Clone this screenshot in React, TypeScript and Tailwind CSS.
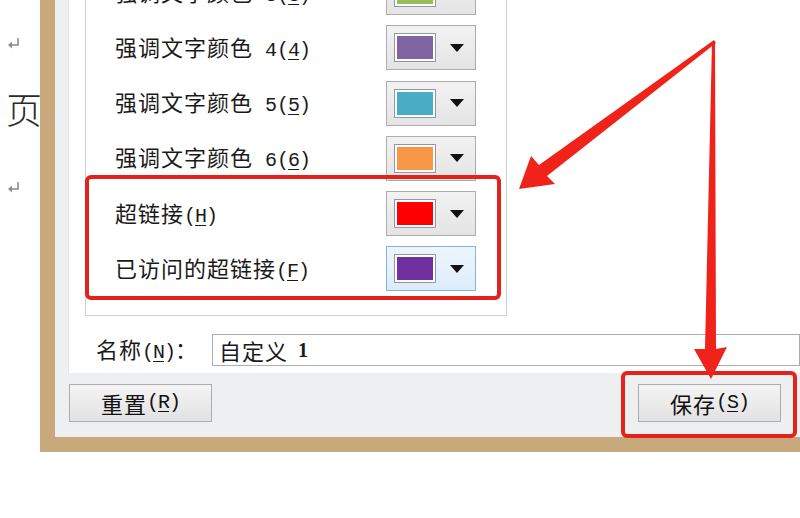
import React from "react";

const cjk = "font-['Noto_Sans_CJK_SC',sans-serif]";
const mono = "font-['Liberation_Mono','Noto_Sans_CJK_SC',monospace]";

type Row = { label: string; num?: string; hotkey: string; color: string; focused?: boolean };

const rows: Row[] = [
  { label: "强调文字颜色", num: "3", hotkey: "3", color: "#9bbb59" },
  { label: "强调文字颜色", num: "4", hotkey: "4", color: "#8064a2" },
  { label: "强调文字颜色", num: "5", hotkey: "5", color: "#4bacc6" },
  { label: "强调文字颜色", num: "6", hotkey: "6", color: "#f79646" },
  { label: "超链接", hotkey: "H", color: "#ff0000" },
  { label: "已访问的超链接", hotkey: "F", color: "#7030a0", focused: true },
];

// paragraph mark as in the word document behind the dialog
const ParaMark = () => (
  <svg width="14" height="13" viewBox="0 0 14 13">
    <path d="M11 1 V8 H3" fill="none" stroke="#8c8c8c" strokeWidth="1.6" />
    <polygon points="1,8 5,4.5 5,11.5" fill="#8c8c8c" />
  </svg>
);

const Hotkey = ({ k }: { k: string }) => (
  <span className={`${mono} text-[20px] tracking-[-1px]`}>
    (<span className="underline underline-offset-[3px] decoration-1">{k}</span>)
  </span>
);

const ColorButton = ({ color, focused }: { color: string; focused?: boolean }) => (
  <div
    className={`w-[90px] h-[45px] flex items-center pl-[7px] border ${
      focused ? "border-[#7eb4ea] bg-gradient-to-b from-[#eef6fd] to-[#dcecfc]" : "border-[#adadad] bg-gradient-to-b from-[#f2f2f2] to-[#e4e4e4]"
    }`}
  >
    <div className="w-[42px] h-[29px] border border-[#9098a4] bg-white p-[2px]">
      <div className="w-full h-full" style={{ backgroundColor: color }} />
    </div>
    <svg width="14" height="8" viewBox="0 0 14 8" className="ml-[14px]">
      <polygon points="0,0 14,0 7,8" fill="#111" />
    </svg>
  </div>
);

const PushButton = ({ text, k }: { text: string; k: string }) => (
  <div className="w-[143px] h-[38px] flex items-center justify-center border border-[#acacac] bg-gradient-to-b from-[#f4f4f4] to-[#e2e2e2] text-[22px] tracking-[1px] text-[#111]">
    {text}
    <Hotkey k={k} />
  </div>
);

export default function App() {
  return (
    <div className={`relative w-[800px] h-[518px] overflow-hidden bg-white ${cjk} text-[#1a1a1a]`}>
      <div className="flex">
        {/* document margin */}
        <div className="w-[40px] shrink-0 pt-[37px] pl-[7px]">
          <ParaMark />
          <div className="mt-[36px] -ml-[1px] text-[36px] leading-[44px] text-[#2a2a2a] font-light whitespace-nowrap">页</div>
          <div className="mt-[51px]">
            <ParaMark />
          </div>
        </div>

        {/* dialog */}
        <div className="relative w-[760px] h-[452px] shrink-0 border-l-[15px] border-b-[15px] border-[#c7a97c] bg-[#eeeff0] flex flex-col">
          <div className="h-[373px] ml-[13px] bg-white border-l border-[#e2e4e6] overflow-hidden flex flex-col">
            {/* colour list */}
            <div className="ml-[16px] w-[422px] h-[316px] border border-[#d0d0d0] border-t-0 overflow-hidden">
              <div className="-mt-[35px] pl-[29px]">
                {rows.map((r) => (
                  <div key={r.hotkey} className="h-[55.25px] flex items-center">
                    <div className="w-[271px] whitespace-nowrap">
                      <span className="text-[22px] tracking-[1px]">{r.label}</span>
                      {r.num && <span className={`${mono} text-[20px]`}> {r.num}</span>}
                      <Hotkey k={r.hotkey} />
                    </div>
                    <ColorButton color={r.color} focused={r.focused} />
                  </div>
                ))}
              </div>
            </div>

            {/* name row */}
            <div className="mt-[16px] flex items-center">
              <div className="w-[143px] pl-[27px] whitespace-nowrap">
                <span className="text-[22px] tracking-[1px]">名称</span>
                <Hotkey k="N" />
                <span className="text-[22px]">：</span>
              </div>
              <div className="flex-1 h-[32px] border border-[#abadb3] flex items-center pl-[6px] whitespace-nowrap">
                <span className="text-[22px] tracking-[1px]">自定义</span>
                <span className="font-['Liberation_Serif',serif] font-bold text-[20px] ml-[10px]">1</span>
              </div>
            </div>
          </div>

          {/* buttons */}
          <div className="flex-1 flex justify-between items-start pt-[11px] pl-[14px] pr-[19px]">
            <PushButton text="重置" k="R" />
            <PushButton text="保存" k="S" />
          </div>
        </div>
      </div>

      {/* annotations */}
      <div className="absolute left-[85px] top-[175px] w-[416px] h-[125px] border-[4px] border-[#e3221c] rounded-[6px] pointer-events-none" />
      <div className="absolute left-[621px] top-[371px] w-[176px] h-[67px] border-[4px] border-[#e3221c] rounded-[6px] pointer-events-none" />
      <svg className="absolute left-0 top-0 pointer-events-none" width="800" height="518" viewBox="0 0 800 518">
        <polygon
          points="714,40 539,165 531,156 519,189 555,184 547,176 716,43"
          fill="#f0231b"
        />
        <polygon
          points="712,42 715,42 716,349 727,347 711,379 694,349 705,349"
          fill="#f0231b"
        />
      </svg>
    </div>
  );
}
